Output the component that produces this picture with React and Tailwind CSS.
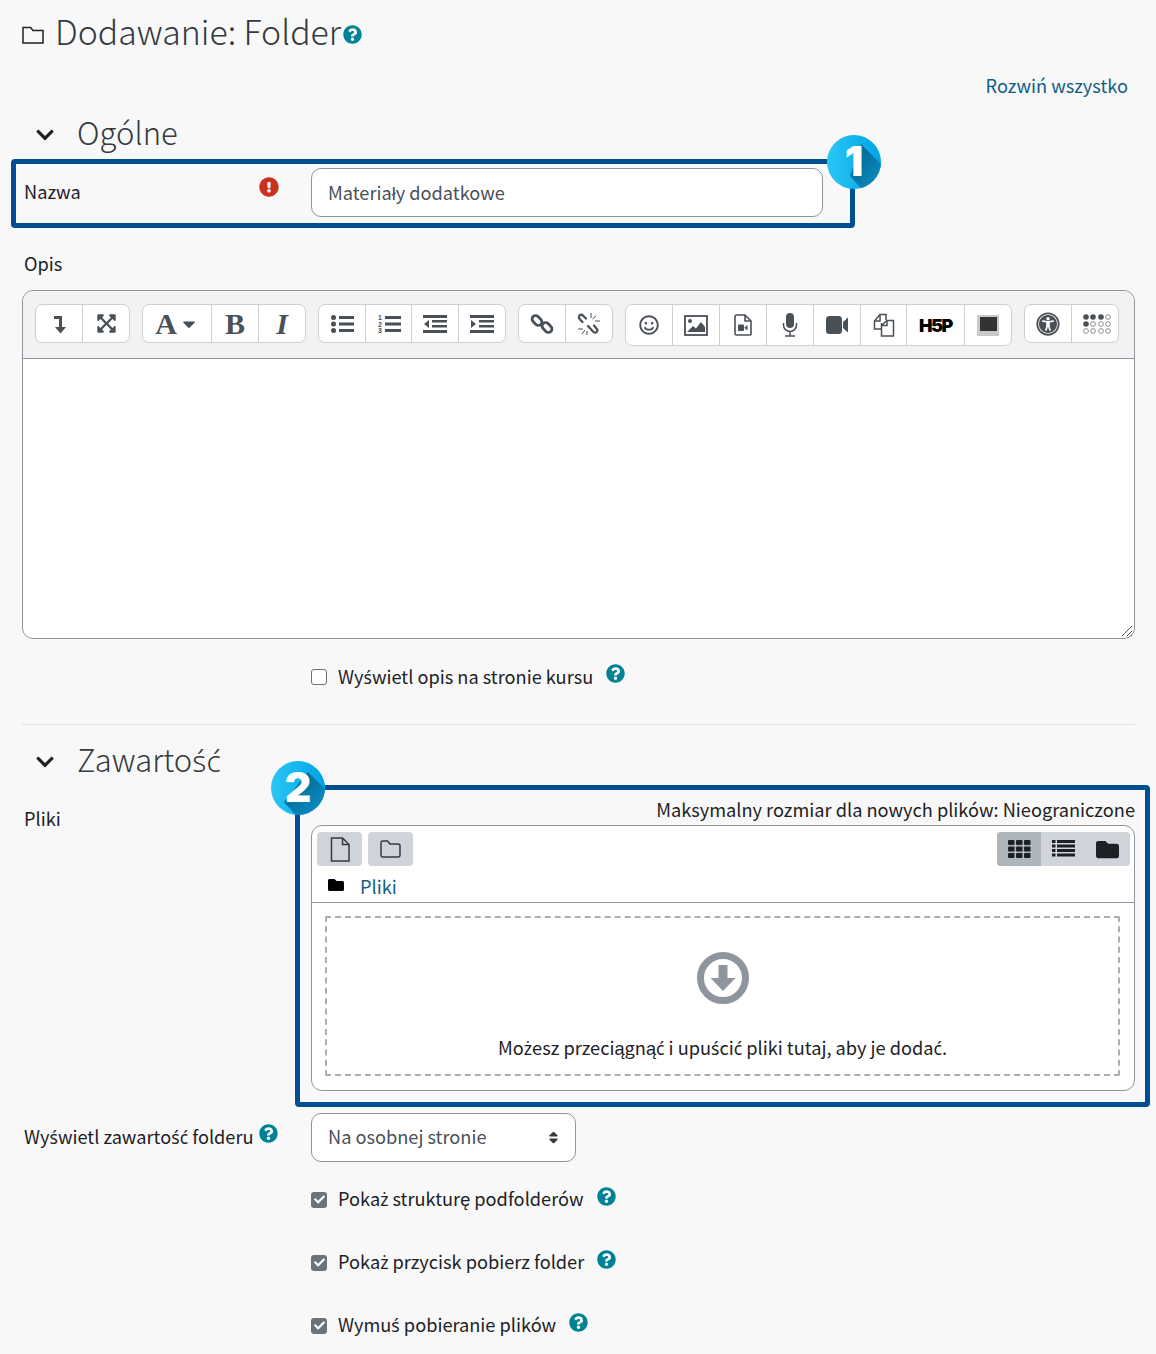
import { FaCaretDown, FaCheck, FaChevronDown, FaExclamationCircle, FaExpandArrowsAlt, FaFolder, FaQuestionCircle, FaRegSmile, FaSort, FaUniversalAccess } from 'react-icons/fa'

const INK = '#495057'

function T({ children }) {
  return children.split(/([śćż])/).map((part, i) =>
    /^[śćż]$/.test(part)
      ? <span key={i} className="font-['Noto_Sans',sans-serif] text-[0.97em]">{part}</span>
      : part
  )
}

function HelpIcon({ className = '' }) {
  return <FaQuestionCircle className={`shrink-0 text-[19px] text-[#008196] ${className}`} />
}

function CollapseIcon() {
  return (
    <svg className="ml-[2px]" width="14" height="20" viewBox="0 0 14 20" fill={INK}>
      <path d="M1 2h8v11h4l-5.500 6.500L2 13h4V5H1z" />
    </svg>
  )
}

function BarsIcon({ kind }) {
  return (
    <svg width="24" height="20" viewBox="0 0 24 20" fill={INK}>
      {kind === 'ul' && (
        <>
          <circle cx="3.500" cy="3.500" r="2.500" />
          <circle cx="3.500" cy="10" r="2.500" />
          <circle cx="3.500" cy="16.500" r="2.500" />
          <rect x="9" y="2" width="15" height="3" />
          <rect x="9" y="8.500" width="15" height="3" />
          <rect x="9" y="15" width="15" height="3" />
        </>
      )}
      {kind === 'ol' && (
        <>
          <text x="1" y="6" fontSize="7" fontWeight="700" fontFamily="Liberation Sans">1</text>
          <text x="1" y="12.500" fontSize="7" fontWeight="700" fontFamily="Liberation Sans">2</text>
          <text x="1" y="19" fontSize="7" fontWeight="700" fontFamily="Liberation Sans">3</text>
          <rect x="8" y="2" width="16" height="3" />
          <rect x="8" y="8.500" width="16" height="3" />
          <rect x="8" y="15" width="16" height="3" />
        </>
      )}
      {(kind === 'out' || kind === 'in') && (
        <>
          <rect x="0" y="1" width="24" height="3" />
          <rect x="9" y="6" width="15" height="2.500" />
          <rect x="9" y="11" width="15" height="2.500" />
          <rect x="0" y="16" width="24" height="3" />
          {kind === 'out' ? <path d="M1 10l5-4v8z" /> : <path d="M6 10L1 6v8z" />}
        </>
      )}
    </svg>
  )
}

function LinkIcon({ broken = false }) {
  if (broken) {
    return (
      <svg width="24" height="24" viewBox="0 0 24 24" fill="none" stroke={INK}>
        <g strokeWidth="2.200" strokeLinecap="round">
          <path d="M9 6.500L6 3.500Q4 2 2.500 3.500 1 5 3 7.500l2.500 2.500" />
          <path d="M11 14l5 5.500q2 2 3.700.500 1.500-1.500-.200-3.500L17 13.500" />
        </g>
        <path d="M14 1v5M19 4l-3.500 3M23 9h-5M1 17h5M5 22l3-4M10 23v-4" strokeWidth="1" />
      </svg>
    )
  }
  return (
    <svg width="24" height="24" viewBox="0 0 24 24" fill="none" stroke={INK} strokeWidth="2.800">
      <rect x="1.500" y="5" width="11" height="7" rx="3.500" transform="rotate(45 7 8.500)" />
      <rect x="11.500" y="12" width="11" height="7" rx="3.500" transform="rotate(45 17 15.500)" />
    </svg>
  )
}

function ImageIcon() {
  return (
    <svg width="24" height="21" viewBox="0 0 24 21" fill={INK}>
      <rect x="1" y="1" width="22" height="19" fill="none" stroke={INK} strokeWidth="1.800" />
      <circle cx="6" cy="6" r="2" />
      <path d="M3 17l6-6 3 2.500L17 7l4 5v5z" />
    </svg>
  )
}

function FileVideoIcon() {
  return (
    <svg width="18" height="22" viewBox="0 0 18 22" fill="none">
      <path d="M1 2.500Q1 1 2.500 1H11l6 6v13.500Q17 21 15.500 21h-13Q1 21 1 19.500z" stroke={INK} strokeWidth="1.600" />
      <path d="M11 1v6h6" stroke={INK} strokeWidth="1.600" />
      <rect x="4" y="10.500" width="6" height="6.500" rx="1" fill={INK} />
      <path d="M10.500 13.500l3-2.500v5.500l-3-2.500z" fill={INK} />
    </svg>
  )
}

function MicIcon() {
  return (
    <svg width="16" height="24" viewBox="0 0 16 24" fill="none" stroke={INK}>
      <rect x="4" y="0" width="8" height="15" rx="4" fill={INK} stroke="none" />
      <path d="M1.500 10v2a6.500 6.500 0 0013 0v-2M8 18.500V23M3 23h10" strokeWidth="1.500" />
    </svg>
  )
}

function VideoIcon() {
  return (
    <svg width="23" height="20" viewBox="0 0 23 20" fill={INK}>
      <rect x="0" y="1" width="16" height="18" rx="3.500" />
      <path d="M17 7l5-4.500V17.500L17 13z" />
    </svg>
  )
}

function CopyIcon() {
  return (
    <svg width="22" height="24" viewBox="0 0 22 24" fill="none" stroke={INK} strokeWidth="1.500">
      <path d="M8 16H1.500V8L7 1.500h6V7" />
      <path d="M7 1.500V8H1.500" />
      <path d="M8.500 10v13h12V7.500H14L8.500 12.500z" fill="#fff" />
      <path d="M14 7.500v5H8.500" />
    </svg>
  )
}

function BrailleIcon() {
  const dots = [
    [3, 4, 1], [3, 11, 1], [3, 18, 0], [10, 4, 1], [10, 11, 0], [10, 18, 0],
    [18, 4, 1], [18, 11, 0], [18, 18, 0], [25, 4, 0], [25, 11, 0], [25, 18, 0],
  ]
  return (
    <svg className="ml-[5px]" width="28" height="22" viewBox="0 0 28 22">
      {dots.map(([x, y, on]) => (
        <circle key={`${x}-${y}`} cx={x} cy={y} r={on ? 2.800 : 2.400} fill={on ? INK : 'none'} stroke={on ? 'none' : '#8a9097'} strokeWidth="1" />
      ))}
    </svg>
  )
}

function GridIcon() {
  const cells = []
  for (const y of [0, 6.500, 13]) for (const x of [0, 8, 16]) cells.push([x, y])
  return (
    <svg width="23" height="18" viewBox="0 0 23 18" fill="#1d2125">
      {cells.map(([x, y]) => <rect key={`${x}-${y}`} x={x} y={y} width="6.500" height="5" rx="1" />)}
    </svg>
  )
}

function ListIcon() {
  return (
    <svg width="23" height="18" viewBox="0 0 23 18" fill="#1d2125">
      {[0, 4.500, 9, 13.500].map((y) => (
        <g key={y}>
          <rect x="0" y={y} width="3.500" height="3" />
          <rect x="5" y={y} width="18" height="3" />
        </g>
      ))}
    </svg>
  )
}

function ToolButton({ children, width = 'w-[46.5px]' }) {
  return (
    <div className={`flex h-full shrink-0 items-center justify-center border-r border-[#cfcfcf] last:border-r-0 ${width}`}>
      {children}
    </div>
  )
}

function ToolGroup({ children, tall = false }) {
  return (
    <div className={`flex rounded-[7px] border border-[#cfcfcf] bg-white ${tall ? 'h-[42px]' : 'h-[39px]'}`}>
      {children}
    </div>
  )
}

function EditorToolbar() {
  const serif = "font-['Liberation_Serif',serif] font-bold text-[#495057]"
  return (
    <div className="flex h-[68px] gap-[12px] rounded-t-[11px] border-b border-[#8f959e] bg-[#f2f2f2] pl-[12px] pt-[13px]">
      <ToolGroup>
        <ToolButton><CollapseIcon /></ToolButton>
        <ToolButton><FaExpandArrowsAlt className="ml-[2px] text-[21px] text-[#495057]" /></ToolButton>
      </ToolGroup>
      <ToolGroup>
        <ToolButton width="w-[69px]">
          <span className={`${serif} text-[30px] leading-none`}>A</span>
          <FaCaretDown className="ml-[2px] text-[20px] text-[#495057]" />
        </ToolButton>
        <ToolButton width="w-[47px]"><span className={`${serif} text-[30px] leading-none`}>B</span></ToolButton>
        <ToolButton width="w-[46px]"><span className={`${serif} text-[30px] leading-none italic`}>I</span></ToolButton>
      </ToolGroup>
      <ToolGroup>
        <ToolButton width="w-[47px]"><BarsIcon kind="ul" /></ToolButton>
        <ToolButton width="w-[46px]"><BarsIcon kind="ol" /></ToolButton>
        <ToolButton width="w-[47px]"><BarsIcon kind="out" /></ToolButton>
        <ToolButton width="w-[46px]"><BarsIcon kind="in" /></ToolButton>
      </ToolGroup>
      <ToolGroup>
        <ToolButton><LinkIcon /></ToolButton>
        <ToolButton><LinkIcon broken /></ToolButton>
      </ToolGroup>
      <ToolGroup tall>
        <ToolButton width="w-[47px]"><FaRegSmile className="text-[20px] text-[#495057]" /></ToolButton>
        <ToolButton width="w-[47px]"><ImageIcon /></ToolButton>
        <ToolButton width="w-[47px]"><FileVideoIcon /></ToolButton>
        <ToolButton width="w-[47px]"><MicIcon /></ToolButton>
        <ToolButton width="w-[47px]"><VideoIcon /></ToolButton>
        <ToolButton width="w-[46px]"><CopyIcon /></ToolButton>
        <ToolButton width="w-[58px]">
          <span className="font-['Inter',sans-serif] text-[18px] font-black tracking-[-1.500px] text-black">H5P</span>
        </ToolButton>
        <ToolButton width="w-[46px]">
          <div className="flex h-[21px] w-[22px] items-start justify-center bg-[#c9c9c9] pt-[2px]">
            <div className="h-[14px] w-[17px] bg-[#333]" />
          </div>
        </ToolButton>
      </ToolGroup>
      <ToolGroup>
        <ToolButton><FaUniversalAccess className="text-[24px] text-[#495057]" /></ToolButton>
        <ToolButton><BrailleIcon /></ToolButton>
      </ToolGroup>
    </div>
  )
}

// numbered marker with the long diagonal shadow
function Badge({ number, shadow, className }) {
  return (
    <div className={`absolute z-10 flex h-[54px] w-[54px] items-center justify-center ${className}`}>
      <svg className="absolute inset-0" width="54" height="54" viewBox="0 0 54 54">
        <defs>
          <linearGradient id={`badge-${number}`} x1="0" y1="0" x2="1" y2="0">
            <stop offset="0" stopColor="#2ac6f5" />
            <stop offset="1" stopColor="#00a3e6" />
          </linearGradient>
          <linearGradient id={`shade-${number}`} x1="0.300" y1="0.300" x2="1" y2="1">
            <stop offset="0" stopColor="#06709c" />
            <stop offset="1" stopColor="#0a9ad6" />
          </linearGradient>
          <clipPath id={`clip-${number}`}>
            <circle cx="27" cy="27" r="27" />
          </clipPath>
        </defs>
        <circle cx="27" cy="27" r="27" fill={`url(#badge-${number})`} />
        <path d={shadow} fill={`url(#shade-${number})`} clipPath={`url(#clip-${number})`} />
      </svg>
      <span className="relative -mt-[2px] font-['Inter',sans-serif] text-[41px] leading-none font-black text-white">{number}</span>
    </div>
  )
}

function SectionHeading({ children, className = '' }) {
  return (
    <div className={`flex items-center ${className}`}>
      <FaChevronDown className="ml-[13px] text-[20px] text-[#1d2125]" />
      <h3 className="ml-[22px] -translate-y-[2px] text-[31px] font-light text-[#343a40]"><T>{children}</T></h3>
    </div>
  )
}

function CheckRow({ label }) {
  return (
    <div className="flex h-[63px] items-center pl-[289px]">
      <span className="flex h-[16px] w-[16px] items-center justify-center rounded-[3px] bg-[#6a737b]">
        <FaCheck className="text-[11px] text-white" />
      </span>
      <span className="ml-[11px] -translate-y-[1px]"><T>{label}</T></span>
      <HelpIcon className="ml-[13px] -mt-[6px]" />
    </div>
  )
}

export default function App() {
  return (
    <div className="relative h-[1354px] w-[1156px] overflow-hidden bg-[#f8f8f8] pl-[22px] pr-[21px] font-['Noto_Sans_CJK_SC',sans-serif] text-[18.2px] text-[#1d2125]">
      <div className="flex h-[66px] items-center">
        <svg className="mt-[4px]" width="22" height="18" viewBox="0 0 22 18" fill="none" stroke="#1d2125" strokeWidth="1.500">
          <path d="M1 17V1.500h7.500L11 4.500h10V17z" />
        </svg>
        <h1 className="ml-[11px] -translate-y-[2px] text-[33.8px] font-light text-[#343a40]">Dodawanie: Folder</h1>
        <HelpIcon className="ml-[2px] mt-[3px]" />
      </div>

      <div className="flex h-[40px] items-center justify-end pr-[7px]">
        <a className="text-[#115e84]">Rozwiń wszystko</a>
      </div>

      <SectionHeading className="h-[53px] pt-[4px]">Ogólne</SectionHeading>

      <div className="relative -ml-[11px] flex h-[69px] w-[844px] items-start rounded-[4px] border-[5px] border-[#004f93] pl-[8px] pt-[4px]">
        <span className="w-[235px] pt-[10px]">Nazwa</span>
        <FaExclamationCircle className="mt-[9px] shrink-0 text-[20px] text-[#ca3120]" />
        <input
          readOnly
          value="Materiały dodatkowe"
          className="ml-[32px] h-[49px] w-[512px] rounded-[10px] border border-[#8f959e] bg-white px-[16px] pb-[2px] text-[#495057] outline-none"
        />
        <Badge number="1" shadow="M34 9L60 35V60H40L23 41z" className="-right-[31px] -top-[29px]" />
      </div>

      <div className="flex h-[62px] items-center pl-[2px] pt-[9px]">Opis</div>

      <div className="h-[349px] rounded-[11px] border border-[#8f959e] bg-white">
        <EditorToolbar />
        <div className="flex h-[279px] items-end justify-end">
          <svg width="14" height="14" viewBox="0 0 14 14" stroke="#555" strokeWidth="1">
            <path d="M2 12L12 2M7 12L12 7M11 12L12 11" />
          </svg>
        </div>
      </div>

      <div className="flex h-[75px] items-center pl-[289px]">
        <span className="h-[16px] w-[16px] rounded-[3px] border border-[#6a737b] bg-white" />
        <span className="ml-[11px]"><T>Wyświetl opis na stronie kursu</T></span>
        <HelpIcon className="ml-[13px] -mt-[6px]" />
      </div>

      <div className="mt-[10px] border-t border-[#dee2e6]" />

      <SectionHeading className="h-[60px] pt-[13px]">Zawartość</SectionHeading>

      <div className="flex items-start">
        <span className="w-[273px] shrink-0 pl-[2px] pt-[20px]">Pliki</span>
        <div className="relative h-[322px] w-[855px] shrink-0 rounded-[4px] border-[5px] border-[#004f93] pl-[11px] pr-[10px]">
          <Badge number="2" shadow="M37 11L60 34V60H30L13 41z" className="-left-[29px] -top-[29px]" />
          <div className="flex h-[35px] items-center justify-end pt-[4px]">Maksymalny rozmiar dla nowych plików: Nieograniczone</div>
          <div className="h-[266px] rounded-[11px] border border-[#8f959e] bg-white">
            <div className="h-[77px] border-b border-[#8f959e]">
              <div className="flex justify-between pl-[5px] pr-[4px] pt-[6px]">
                <div className="flex gap-[6px]">
                  <div className="flex h-[34px] w-[45px] items-center justify-center rounded-[4px] bg-[#ced4da]">
                    <svg width="20" height="25" viewBox="0 0 20 25" fill="none" stroke="#343a40" strokeWidth="1.500">
                      <path d="M1.500 1h11L19 7.500V24H1.500zM12.500 1v6.500H19" />
                    </svg>
                  </div>
                  <div className="flex h-[34px] w-[45px] items-center justify-center rounded-[4px] bg-[#ced4da]">
                    <svg width="21" height="18" viewBox="0 0 21 18" fill="none" stroke="#343a40" strokeWidth="1.500">
                      <path d="M1 3q0-2 2-2h4.500l2.500 3h8q2 0 2 2v9q0 2-2 2H3q-2 0-2-2z" />
                    </svg>
                  </div>
                </div>
                <div className="flex h-[34px] w-[133px] overflow-hidden rounded-[4px] bg-[#ced4da]">
                  <div className="flex flex-1 items-center justify-center bg-[#adb5bd]"><GridIcon /></div>
                  <div className="flex flex-1 items-center justify-center"><ListIcon /></div>
                  <div className="flex flex-1 items-center justify-center">
                    <FaFolder className="text-[23px] text-[#1d2125]" />
                  </div>
                </div>
              </div>
              <div className="flex h-[37px] items-center pl-[16px]">
                <FaFolder className="text-[16px] text-black" />
                <a className="ml-[16px] translate-y-[2px] text-[#115e84]">Pliki</a>
              </div>
            </div>
            <div className="mx-[13px] mt-[13px] flex h-[160px] w-[795px] flex-col items-center rounded-[2px] border-2 border-dashed border-[#adadad]">
              <svg className="mt-[34px] shrink-0" width="52" height="52" viewBox="0 0 52 52" fill="#8f959e">
                <circle cx="26" cy="26" r="22.500" fill="none" stroke="#8f959e" strokeWidth="7" />
                <path d="M21.500 13h9v13h8L26 39 13.500 26h8z" />
              </svg>
              <span className="mt-[30px]"><T>Możesz przeciągnąć i upuścić pliki tutaj, aby je dodać.</T></span>
            </div>
          </div>
        </div>
      </div>

      <div className="mt-[6px] flex h-[49px] items-center">
        <div className="flex w-[289px] shrink-0 items-center pl-[2px]">
          <span className="-translate-y-[1px]"><T>Wyświetl zawartość folderu</T></span>
          <HelpIcon className="ml-[5px] -mt-[8px]" />
        </div>
        <div className="flex h-[49px] w-[265px] items-center justify-between rounded-[10px] border border-[#8f959e] bg-white pl-[16px] pr-[14px] text-[#495057]">
          <span className="-translate-y-[1px]">Na osobnej stronie</span>
          <FaSort className="text-[15px] text-[#343a40]" />
        </div>
      </div>

      <div className="mt-[6px]">
        <CheckRow label="Pokaż strukturę podfolderów" />
        <CheckRow label="Pokaż przycisk pobierz folder" />
        <CheckRow label="Wymuś pobieranie plików" />
      </div>
    </div>
  )
}
